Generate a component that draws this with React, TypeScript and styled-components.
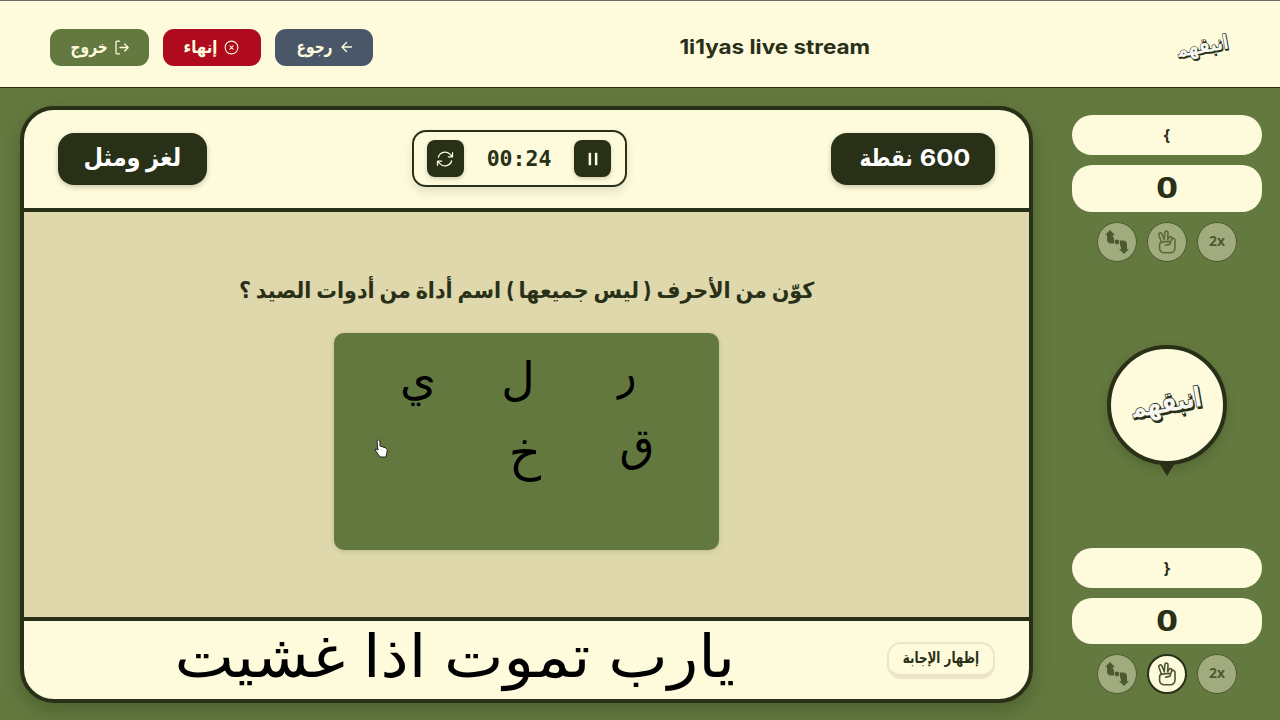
import { createGlobalStyle } from 'styled-components';
import styled from 'styled-components';
import { HiOutlineArrowPath, HiOutlineXCircle, HiPause } from 'react-icons/hi2';

const cream = '#fefadc';
const dark = '#283018';
const green = '#64793f';

const GlobalStyle = createGlobalStyle`
  * {
    box-sizing: border-box;
  }
  body {
    margin: 0;
    overflow: hidden;
    background: ${green};
    color: ${dark};
    font-family: Inter, 'DejaVu Sans', sans-serif;
  }
`;

const Page = styled.div`
  width: 1280px;
  height: 720px;
  display: flex;
  flex-direction: column;
`;

// stretches a line of text around its own centre
const Fit = styled.span<{ $x?: number; $y?: number; $size: number; $dy?: number }>`
  display: inline-block;
  white-space: nowrap;
  line-height: 1;
  font-size: ${(p) => p.$size}px;
  transform: translateY(${(p) => p.$dy ?? 0}px) scale(${(p) => p.$x ?? 1}, ${(p) => p.$y ?? 1});
`;

const Header = styled.header`
  height: 88px;
  flex: none;
  display: flex;
  align-items: center;
  justify-content: space-between;
  padding: 6px 50px 0;
  background: ${cream};
  border-top: 1px solid #756b60;
  border-bottom: 1px solid ${dark};
`;

const Actions = styled.div`
  display: flex;
  gap: 14px;
`;

const ActionButton = styled.button<{ $bg: string }>`
  width: 98px;
  height: 37px;
  display: flex;
  align-items: center;
  justify-content: center;
  gap: 6px;
  padding: 0;
  border: 0;
  border-radius: 11px;
  background: ${(p) => p.$bg};
  color: ${cream};
  font: bold 16px 'DejaVu Sans', sans-serif;

  &:first-child {
    width: 99px;
  }
`;

const Title = styled.h1`
  width: 190px;
  margin: 0;
  display: flex;
  justify-content: center;
  font-weight: 700;
`;

const Body = styled.main`
  flex: 1;
  display: flex;
  padding: 18px 18px 18px 20px;
`;

const Board = styled.section`
  width: 1013px;
  height: 597px;
  display: flex;
  flex-direction: column;
  overflow: hidden;
  border: 4px solid ${dark};
  border-radius: 34px;
  background: ${cream};
  box-shadow: 0 8px 18px rgba(30, 45, 15, 0.3);
`;

const BoardTop = styled.div`
  height: 102px;
  flex: none;
  display: flex;
  align-items: center;
  justify-content: space-between;
  padding: 0 34px 1px;
  border-bottom: 4px solid ${dark};
`;

const Badge = styled.div<{ $width: number }>`
  width: ${(p) => p.$width}px;
  height: 52px;
  display: flex;
  align-items: center;
  justify-content: center;
  gap: 8px;
  border-radius: 16px;
  background: ${dark};
  color: #fff;
  font-weight: bold;
  box-shadow: 0 2px 5px rgba(40, 48, 24, 0.25);
`;

const Timer = styled.div`
  width: 215px;
  height: 57px;
  display: flex;
  align-items: center;
  justify-content: space-between;
  padding: 0 13px;
  border: 2px solid ${dark};
  border-radius: 14px;
  box-shadow: 0 5px 10px rgba(40, 48, 24, 0.12);
  font: bold 21.5px 'DejaVu Sans Mono', monospace;
`;

const TimerButton = styled.button`
  width: 37px;
  height: 37px;
  display: grid;
  place-items: center;
  padding: 0;
  border: 0;
  border-radius: 8px;
  background: ${dark};
  color: ${cream};
  box-shadow: 0 2px 4px rgba(40, 48, 24, 0.2);
`;

const Question = styled.div`
  flex: 1;
  display: flex;
  flex-direction: column;
  align-items: center;
  padding-top: 66px;
  background: #dfd8ac;
`;

const QuestionText = styled.h2`
  height: 28px;
  margin: 0;
  font-size: 22px;
  font-weight: bold;
`;

const Card = styled.div`
  width: 385px;
  height: 217px;
  margin-top: 27px;
  border-radius: 10px;
  background: #62783f;
  box-shadow: 0 1px 5px rgba(40, 48, 24, 0.2);
`;

const BoardBottom = styled.div`
  height: 82px;
  flex: none;
  display: flex;
  align-items: center;
  justify-content: space-between;
  padding: 0 34px 0 152px;
  border-top: 4px solid ${dark};
`;

const Caption = styled.p`
  width: 558px;
  margin: 0;
  display: flex;
  justify-content: center;
  color: #000;
  direction: rtl;
`;

const Reveal = styled.button`
  width: 108px;
  height: 37px;
  display: flex;
  align-items: center;
  justify-content: center;
  padding: 0;
  border: 2px solid #ece5c6;
  border-bottom-width: 5px;
  border-radius: 14px;
  background: ${cream};
  color: ${dark};
  font-family: 'DejaVu Sans', sans-serif;
  font-weight: bold;
`;

const Side = styled.aside`
  width: 190px;
  margin: 9px 0 9px auto;
  display: flex;
  flex-direction: column;
  justify-content: space-between;
  align-items: center;
`;

const Team = styled.div`
  width: 100%;
  display: flex;
  flex-direction: column;
  align-items: center;
  gap: 10px;
`;

const Pill = styled.div<{ $height: number }>`
  width: 100%;
  height: ${(p) => p.$height}px;
  display: grid;
  place-items: center;
  border-radius: 20px;
  background: ${cream};
  font-family: 'Open Sans', sans-serif;
  font-weight: 700;
`;

const Helpers = styled.div`
  display: flex;
  gap: 10px;
`;

const Helper = styled.button<{ $active?: boolean }>`
  width: 40px;
  height: 40px;
  display: grid;
  place-items: center;
  padding: 0;
  border: ${(p) => (p.$active ? 2 : 1.5)}px solid ${dark};
  border-radius: 50%;
  background: ${cream};
  color: ${dark};
  opacity: ${(p) => (p.$active ? 1 : 0.4)};
  font: 700 14px 'Open Sans', sans-serif;
`;

const Turn = styled.div`
  margin-top: 11px;
  display: flex;
  flex-direction: column;
  align-items: center;
`;

const Disc = styled.div`
  width: 120px;
  height: 120px;
  display: grid;
  place-items: center;
  border: 4px solid ${dark};
  border-radius: 50%;
  background: ${cream};
  box-shadow: 0 5px 12px rgba(30, 45, 15, 0.22);
`;

const Pointer = styled.div`
  margin-top: -2px;
  border: 8px solid transparent;
  border-top: 13px solid ${dark};
  border-bottom: 0;
`;

const ExitIcon = () => (
  <svg width='15' height='15' viewBox='0 0 15 15' fill='none' stroke='currentColor' strokeWidth='1.3' strokeLinecap='round' strokeLinejoin='round'>
    <path d='M4.5 1.2H2a1 1 0 0 0-1 1v10.6a1 1 0 0 0 1 1H4.5M5 7.5h8M9.7 4L13.2 7.5L9.7 11' />
  </svg>
);

const BackIcon = () => (
  <svg width='12' height='12' viewBox='0 0 12 12' fill='none' stroke='currentColor' strokeWidth='1.4' strokeLinecap='round' strokeLinejoin='round'>
    <path d='M10.5 6H1.2M5.5 1.5L1 6L5.5 10.5' />
  </svg>
);

const SwapIcon = () => (
  <svg width='24' height='24' viewBox='0 0 24 24' fill='currentColor'>
    <path d='M5 0L10 5H8V7.5H9V13.5H6Q2 13.5 2 9.5V5H0Z' />
    <path d='M5 0L10 5H8V7.5H9V13.5H6Q2 13.5 2 9.5V5H0Z' transform='rotate(180 12 12)' />
    <circle cx='12' cy='12' r='2.4' />
  </svg>
);

const PeaceIcon = () => (
  <svg width='20' height='24' viewBox='0 0 20 24' fill='none' stroke='#4c5530' strokeWidth='1.6' strokeLinecap='round' strokeLinejoin='round'>
    <path d='M4.6 12.5L1.9 5.2Q1.5 3.3 3 2.9Q4.5 2.6 5.1 4.2L7.3 9.8L7.8 2.6Q8 1 9.6 1.1Q11.1 1.3 11 2.9L10.7 9.5' />
    <path d='M10.7 9.5L12 7.3Q12.8 6.2 14 6.8Q15.3 7.5 14.7 8.9L13.5 12M14.7 9Q15.5 8 16.8 8.5Q18.2 9.2 18 11V17.5Q18 22.8 13 22.8H7.5Q3 22.8 2.6 18.5V14.5Q2.7 12.3 5 12.1L11.5 11.4Q13.6 11.5 13.5 13.2Q13.3 14.5 11.5 14.6L8.5 15.2' />
  </svg>
);

// the zero-width joiner keeps the last letter in its flat joined form
const logoText = 'انبقهم\u200d';

const Logo = ({ width }: { width: number }) => (
  <svg width={width} height={width * 0.5} viewBox='0 0 76 38' overflow='visible'>
    <g transform='rotate(-10 38 19)' fontFamily='DejaVu Sans, sans-serif' fontWeight='bold' fontSize='28' textAnchor='middle' paintOrder='stroke'>
      <text x='39' y='28.5' fill={dark} stroke={dark} strokeWidth='1.6' textLength='72' lengthAdjust='spacingAndGlyphs'>{logoText}</text>
      <text x='38' y='26.5' fill='#f7f7f4' stroke={dark} strokeWidth='1.6' textLength='72' lengthAdjust='spacingAndGlyphs'>{logoText}</text>
    </g>
  </svg>
);

const letters = [
  { char: 'ر', x: 293, y: 55, size: 42, turn: -8 },
  { char: 'ل', x: 184, y: 62, size: 46 },
  { char: 'ي', x: 84, y: 62, size: 46 },
  { char: 'ق', x: 303, y: 127, size: 45 },
  { char: 'خ', x: 191, y: 137, size: 50 },
];

const TeamPanel = ({ name, active }: { name: string; active?: boolean }) => (
  <Team>
    <Pill $height={40}><Fit $size={16}>{name}</Fit></Pill>
    <Pill $height={46.5}><Fit $size={28} $x={1.35} $dy={-1}>0</Fit></Pill>
    <Helpers>
      <Helper><SwapIcon /></Helper>
      <Helper $active={active}><PeaceIcon /></Helper>
      <Helper><Fit $size={14} $dy={-1}>2x</Fit></Helper>
    </Helpers>
  </Team>
);

const App = () => {
  return (
    <Page>
      <GlobalStyle />
      <Header>
        <Actions>
          <ActionButton $bg={green}><Fit $size={15} $x={0.92} $y={1.18}>خروج</Fit><ExitIcon /></ActionButton>
          <ActionButton $bg='#b00a1e'><Fit $size={15} $y={1.18}>إنهاء</Fit><HiOutlineXCircle size={17} /></ActionButton>
          <ActionButton $bg='#4a5768'><Fit $size={15} $x={0.92} $y={1.18}>رجوع</Fit><BackIcon /></ActionButton>
        </Actions>
        <Title><Fit $size={20} $x={1.125}>1i1yas live stream</Fit></Title>
        <Logo width={54} />
      </Header>
      <Body>
        <Board>
          <BoardTop>
            <Badge $width={149}><Fit $size={25} $x={0.9} $dy={-1} dir='rtl'>لغز ومثل</Fit></Badge>
            <Timer>
              <TimerButton><HiOutlineArrowPath size={20} /></TimerButton>
              <span>00:24</span>
              <TimerButton><HiPause size={20} /></TimerButton>
            </Timer>
            <Badge $width={164} dir='rtl'>
              <Fit $size={23} $x={1.1} $y={0.97}>600</Fit>
              <Fit $size={21} $x={0.95} $y={1.12} $dy={-1}>نقطة</Fit>
            </Badge>
          </BoardTop>
          <Question>
            <QuestionText dir='rtl'>
              <Fit $size={22} $x={0.938} $dy={-1}>كوّن من الأحرف ( ليس جميعها ) اسم أداة من أدوات الصيد ؟</Fit>
            </QuestionText>
            <Card>
              <svg width='385' height='217' fontFamily='DejaVu Sans, sans-serif' textAnchor='middle'>
                {letters.map((l) => (
                  <text key={l.char} x={l.x} y={l.y} fontSize={l.size} transform={`rotate(${l.turn ?? 0} ${l.x} ${l.y})`}>{l.char}</text>
                ))}
                <path d='M43 109q0-2 1.5-2t1.5 2v4l6 2q2 1 1 4l-1 5h-6l-5-7q0-2 3 0z' fill='#fff' stroke='#222' />
              </svg>
            </Card>
          </Question>
          <BoardBottom>
            <Caption><Fit $size={62} $x={1.02} $y={0.95} $dy={-4}>يارب تموت اذا غشيت</Fit></Caption>
            <Reveal><Fit $size={14} $x={0.85} $y={1.1} $dy={-1}>إظهار الإجابة</Fit></Reveal>
          </BoardBottom>
        </Board>
        <Side>
          <TeamPanel name='{' />
          <Turn>
            <Disc><Logo width={74} /></Disc>
            <Pointer />
          </Turn>
          <TeamPanel name='}' active />
        </Side>
      </Body>
    </Page>
  );
};

export default App;
